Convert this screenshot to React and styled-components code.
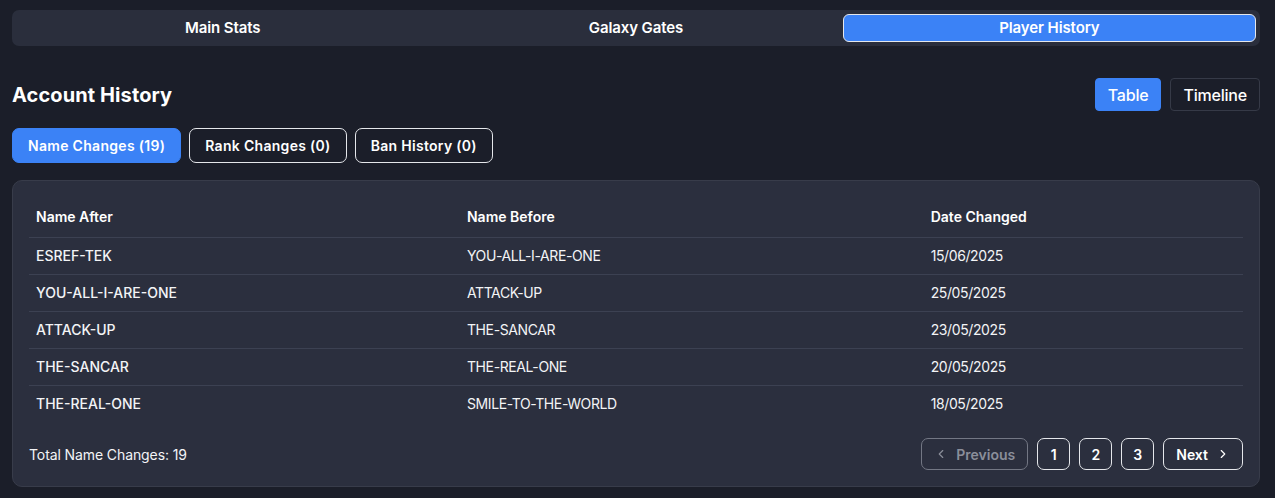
import { useState } from 'react'
import styled, { createGlobalStyle } from 'styled-components'

const rows = [
    { after: 'ESREF-TEK', before: 'YOU-ALL-I-ARE-ONE', date: '15/06/2025' },
    { after: 'YOU-ALL-I-ARE-ONE', before: 'ATTACK-UP', date: '25/05/2025' },
    { after: 'ATTACK-UP', before: 'THE-SANCAR', date: '23/05/2025' },
    { after: 'THE-SANCAR', before: 'THE-REAL-ONE', date: '20/05/2025' },
    { after: 'THE-REAL-ONE', before: 'SMILE-TO-THE-WORLD', date: '18/05/2025' },
]

const ChevronLeft = () => (
    <svg width='14' height='14' viewBox='0 0 24 24' fill='none' stroke='currentColor' strokeWidth='2' strokeLinecap='round' strokeLinejoin='round'>
        <path d='m15 18-6-6 6-6' />
    </svg>
)

const ChevronRight = () => (
    <svg width='14' height='14' viewBox='0 0 24 24' fill='none' stroke='currentColor' strokeWidth='2' strokeLinecap='round' strokeLinejoin='round'>
        <path d='m9 18 6-6-6-6' />
    </svg>
)

const App = () => {
    const [tab, setTab] = useState('Player History')
    const [view, setView] = useState('Table')
    const [sub, setSub] = useState('name')

    return (
        <>
            <GlobalStyle />
            <Page>
                <TabBar>
                    {['Main Stats', 'Galaxy Gates', 'Player History'].map((t) => (
                        <TabButton key={t} $active={tab === t} onClick={() => setTab(t)}>
                            {t}
                        </TabButton>
                    ))}
                </TabBar>

                <HeaderRow>
                    <Title>Account History</Title>
                    <ViewToggle>
                        {['Table', 'Timeline'].map((v) => (
                            <ViewButton key={v} $active={view === v} onClick={() => setView(v)}>
                                {v}
                            </ViewButton>
                        ))}
                    </ViewToggle>
                </HeaderRow>

                <SubTabs>
                    <SubTab $active={sub === 'name'} onClick={() => setSub('name')}>Name Changes (19)</SubTab>
                    <SubTab $active={sub === 'rank'} onClick={() => setSub('rank')}>Rank Changes (0)</SubTab>
                    <SubTab $active={sub === 'ban'} onClick={() => setSub('ban')}>Ban History (0)</SubTab>
                </SubTabs>

                <Card>
                    <Table>
                        <thead>
                            <tr>
                                <Th style={{ width: '35.5%' }}>Name After</Th>
                                <Th style={{ width: '38.2%' }}>Name Before</Th>
                                <Th>Date Changed</Th>
                            </tr>
                        </thead>
                        <tbody>
                            {rows.map((r) => (
                                <tr key={r.after}>
                                    <Td $strong>{r.after}</Td>
                                    <Td>{r.before}</Td>
                                    <Td>{r.date}</Td>
                                </tr>
                            ))}
                        </tbody>
                    </Table>
                    <Footer>
                        <Total>Total Name Changes: 19</Total>
                        <Pagination>
                            <PageButton disabled $wide>
                                <ChevronLeft />
                                Previous
                            </PageButton>
                            <PageButton>1</PageButton>
                            <PageButton>2</PageButton>
                            <PageButton>3</PageButton>
                            <PageButton $wide>
                                Next
                                <ChevronRight />
                            </PageButton>
                        </Pagination>
                    </Footer>
                </Card>
            </Page>
        </>
    )
}

const GlobalStyle = createGlobalStyle`
    * {
        box-sizing: border-box;
    }

    body {
        margin: 0;
        background: #1b1e29;
        color: #f3f4f6;
        font-family: Inter, 'Noto Sans', sans-serif;
    }
`

const Page = styled.div`
    padding: 10px 15px 11px 12px;
    min-height: 498px;
    background: #1b1e29;
`

const TabBar = styled.div`
    display: grid;
    grid-template-columns: repeat(3, 1fr);
    height: 36px;
    padding: 4px;
    background: #2a2e3c;
    border-radius: 7px;
`

const TabButton = styled.button`
    padding: 0 0 1px;
    font-family: inherit;
    font-size: 15px;
    font-weight: 600;
    letter-spacing: -0.1px;
    color: #ffffff;
    background: ${({ $active }) => ($active ? '#3b82f6' : 'transparent')};
    border: 1px solid ${({ $active }) => ($active ? '#e5e7eb' : 'transparent')};
    border-radius: 6px;
    cursor: pointer;
`

const HeaderRow = styled.div`
    display: flex;
    justify-content: space-between;
    align-items: center;
    margin-top: 32px;
`

const Title = styled.h2`
    margin: 0;
    font-size: 20px;
    font-weight: 700;
    letter-spacing: 0.1px;
    color: #ffffff;
`

const ViewToggle = styled.div`
    display: flex;
    gap: 9px;
`

const ViewButton = styled.button`
    height: 33px;
    padding: 0 12px;
    font-family: inherit;
    font-size: 16px;
    font-weight: 500;
    letter-spacing: -0.2px;
    color: #ffffff;
    background: ${({ $active }) => ($active ? '#3b82f6' : '#1b1e29')};
    border: 1px solid ${({ $active }) => ($active ? '#3b82f6' : '#363a47')};
    border-radius: 4px;
    cursor: pointer;
`

const SubTabs = styled.div`
    display: flex;
    gap: 8px;
    margin-top: 17px;
`

const SubTab = styled.button`
    height: 35px;
    padding: 0 15px;
    font-family: inherit;
    font-size: 14px;
    font-weight: 600;
    letter-spacing: 0.3px;
    color: #ffffff;
    background: ${({ $active }) => ($active ? '#3b82f6' : 'transparent')};
    border: 1px solid ${({ $active }) => ($active ? '#3b82f6' : '#e5e7eb')};
    border-radius: 7px;
    cursor: pointer;
`

const Card = styled.div`
    margin-top: 17px;
    padding: 16px;
    background: #2b2f3e;
    border: 1px solid #383c4a;
    border-radius: 10px;
`

const Table = styled.table`
    width: 100%;
    border-collapse: collapse;
`

const Th = styled.th`
    height: 40px;
    padding: 0 7px;
    text-align: left;
    font-size: 14px;
    font-weight: 600;
    color: #ffffff;
    border-bottom: 1px solid #3c4152;
`

const Td = styled.td`
    height: 37px;
    padding: 0 7px;
    font-size: 14px;
    font-weight: ${({ $strong }) => ($strong ? 500 : 400)};
    letter-spacing: ${({ $strong }) => ($strong ? '0' : '-0.4px')};
    color: #f3f4f6;
    border-bottom: 1px solid #3c4152;

    tr:last-child & {
        border-bottom: none;
    }
`

const Footer = styled.div`
    display: flex;
    justify-content: space-between;
    align-items: center;
    margin-top: 16px;
`

const Total = styled.span`
    font-size: 14px;
    letter-spacing: -0.1px;
    color: #f3f4f6;
`

const Pagination = styled.div`
    display: flex;
    gap: 9px;
`

const PageButton = styled.button`
    display: flex;
    align-items: center;
    justify-content: center;
    gap: ${({ $wide }) => ($wide ? '8px' : '0')};
    height: 32px;
    min-width: 33px;
    padding: 0 ${({ $wide }) => ($wide ? '12px' : '10px')};
    font-family: inherit;
    font-size: 14px;
    font-weight: 600;
    color: #ffffff;
    background: transparent;
    border: 1px solid #e5e7eb;
    border-radius: 7px;
    cursor: pointer;

    &:disabled {
        color: #8a8e9a;
        border-color: #737784;
        cursor: default;
    }
`

export default App
